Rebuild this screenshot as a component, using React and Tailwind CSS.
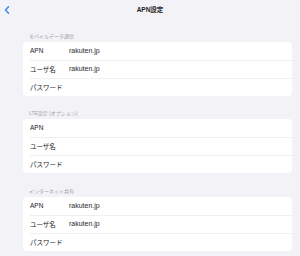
import React from "react";

const font = { fontFamily: '"Liberation Sans", "Noto Sans CJK JP", sans-serif' };

function Row({ label, value, first }) {
  return (
    <div className="h-[18px] pl-[7px]">
      <div className={`h-full flex items-center ${first ? "" : "border-t border-[#efeff3]"}`}>
        <span className="w-[39px] shrink-0 text-[6.5px] text-[#1c1c1e]">{label}</span>
        <span className="text-[7px] text-[#2a2a2e]">{value}</span>
      </div>
    </div>
  );
}

function Section({ title, rows, className }) {
  return (
    <div className={className}>
      <div className="h-[6px] leading-[6px] pl-[6px] text-[5px] text-[#a3a3a8] mb-[3px]">{title}</div>
      <div className="bg-white rounded-[4px]">
        {rows.map((r, i) => (
          <Row key={i} label={r[0]} value={r[1]} first={i === 0} />
        ))}
      </div>
    </div>
  );
}

export default function App() {
  return (
    <div className="w-[300px] h-[256px] bg-[#f2f2f7] overflow-hidden" style={font}>
      <div className="h-[20px] relative flex items-center justify-center">
        <svg className="absolute left-[4px] top-[6px]" width="6" height="8" viewBox="0 0 6 8">
          <path d="M4.5 0.8 L1.5 4 L4.5 7.2" fill="none" stroke="#3a82f7" strokeWidth="1.4" strokeLinecap="round" strokeLinejoin="round" />
        </svg>
        <span className="text-[6.5px] font-bold text-[#1c1c1e]">APN設定</span>
      </div>
      <div className="pl-[23px] pr-[8px]">
        <Section
          className="mt-[13px]"
          title="モバイルデータ通信"
          rows={[["APN", "rakuten.jp"], ["ユーザ名", "rakuten.jp"], ["パスワード", ""]]}
        />
        <Section
          className="mt-[14px]"
          title="LTE設定 (オプション)"
          rows={[["APN", ""], ["ユーザ名", ""], ["パスワード", ""]]}
        />
        <Section
          className="mt-[15px]"
          title="インターネット共有"
          rows={[["APN", "rakuten.jp"], ["ユーザ名", "rakuten.jp"], ["パスワード", ""]]}
        />
      </div>
    </div>
  );
}
